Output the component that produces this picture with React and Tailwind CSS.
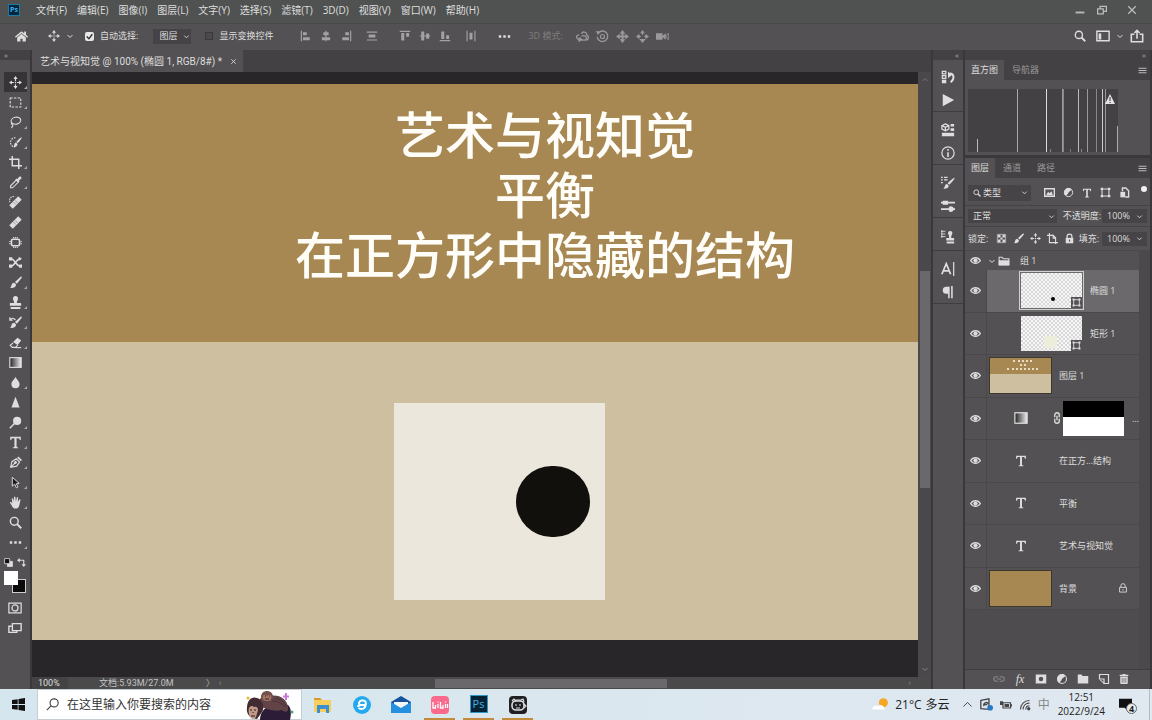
import React from "react";
import { FaHome, FaTrashAlt } from "react-icons/fa";

const Icon = ({ children, className = "size-[14px]" }) => (
  <svg
    viewBox="0 0 16 16"
    fill="none"
    stroke="currentColor"
    strokeWidth="1.4"
    className={`shrink-0 ${className}`}
    aria-hidden="true"
  >
    {children}
  </svg>
);

const Solid = ({ d }) => <path d={d} fill="currentColor" stroke="none" />;

const MOVE = (
  <>
    <path d="M8 3v10M3 8h10" strokeDasharray="3 1.2 1.6 1.2 3" />
    <Solid d="M8 0l2.6 3.6H5.4zM8 16l2.6-3.6H5.4zM0 8l3.6-2.6v5.2zM16 8l-3.6-2.6v5.2z" />
  </>
);
const BRUSH = (
  <Solid d="M15.5.8c.6.6.3 1.3-.2 2L9.6 9.6 7.3 7.4 14 1.2c.5-.5 1-.9 1.500-.4zM6.500 8.200l2.200 2.200c0 3-3 5-7.700 4.200 2-.8 1.600-2 2.200-3.800.5-1.500 1.800-2.600 3.300-2.600z" />
);
const STAMP = (
  <Solid d="M8 0a3.200 3.200 0 0 1 3 4.200C10.500 5.600 9.700 6.500 9.700 8.500H14c.8 0 1 .5 1 1.200V12H1V9.700c0-.7.2-1.200 1-1.200h4.300c0-2-.8-2.900-1.300-4.300A3.200 3.200 0 0 1 8 0zM2 13.500h12V16H2z" />
);
const TYPE = (
  <Solid d="M1.500 1h13v4h-1.200c-.2-1.700-.8-2.300-2.300-2.300H9.300v10c0 .9.4 1.200 1.900 1.300v1H4.800v-1c1.500-.1 1.900-.4 1.900-1.300v-10H5C3.500 2.700 2.900 3.300 2.700 5H1.500z" />
);
const BANDAGE = (
  <>
    <path d="M2.500 13.500l11-11" strokeWidth="6" />
    <path d="M5.500 7.500l3 3M7.500 5.500l3 3" stroke="#8a888a" strokeWidth="1" />
  </>
);
const LENS = (
  <>
    <circle cx="6.500" cy="6.500" r="4.800" strokeWidth="1.800" />
    <path d="M10 10l5 5" strokeWidth="2.400" />
  </>
);
const GRADIENT = (
  <>
    <defs>
      <linearGradient id="ramp">
        <stop offset="0" stopColor="#222" />
        <stop offset="1" stopColor="#eee" />
      </linearGradient>
    </defs>
    <rect x="1" y="2" width="14" height="12" fill="url(#ramp)" />
  </>
);
const DOTS = <Solid d="M1 6.500h3v3H1zM6.500 6.500h3v3h-3zM12 6.500h3v3h-3z" />;
const HALF = (
  <>
    <circle cx="8" cy="8" r="6" />
    <Solid d="M12.500 3.500A6.300 6.300 0 1 0 3.500 12.500c3-.5 3-2 4.500-4.500s3-2 4.500-4.500z" />
  </>
);
const FRAME = (
  <>
    <path d="M3 3h10v10H3z" strokeWidth="1.600" />
    <Solid d="M1 1h3.500v3.500H1zM11.500 1H15v3.500h-3.500zM1 11.500h3.500V15H1zM11.500 11.500H15V15h-3.500z" />
  </>
);
const LOCK = (
  <>
    <path d="M4.500 8V5a3.500 3.500 0 0 1 7 0v3" strokeWidth="1.800" />
    <Solid d="M2.500 7h11v8h-11z" />
    <path d="M8 9.500v3" stroke="#535153" strokeWidth="1.600" />
  </>
);

const TOOLS = [
  { name: "移动", icon: MOVE, more: true },
  { name: "矩形选框", icon: <path d="M1.500 2.500h13v11h-13z" strokeDasharray="3 1.600" />, more: true },
  {
    name: "套索",
    icon: (
      <>
        <ellipse cx="8.500" cy="5.800" rx="6" ry="4.300" transform="rotate(-12 8.500 5.800)" />
        <path d="M3.500 8.500c-1.500 2 1.700 1.700 1.200 3.500-.3 1.200-1.700 1.500-1.400 3" />
      </>
    ),
    more: true,
  },
  {
    name: "快速选择",
    icon: (
      <>
        <path d="M8 2.200A5.500 5.500 0 1 0 7 13.500" strokeDasharray="2 1.300" />
        <Solid d="M15.800 1.500c.4 1-3.300 6-5 7.300L9 7.300C10 5.500 15 .9 15.800 1.500zM8.500 8l2 1.800c0 2.500-2 4.200-5.300 4 1.300-1 1-2 1.300-3.300.3-1.300 1-2.300 2-2.500z" />
      </>
    ),
    more: true,
  },
  { name: "裁剪", icon: <path d="M4 0v12h12M0 4h12v12" strokeWidth="1.800" />, more: true },
  {
    name: "吸管",
    icon: (
      <>
        <path d="M9 5l2.500 2.500-7 7H2V12z" />
        <Solid d="M7.800 4.300l1.300-1.200 1 .9 2.500-3c1.500-1.300 3.700.9 2.400 2.400l-3 2.500.9 1-1.200 1.300z" />
      </>
    ),
    more: true,
  },
  {
    name: "污点修复",
    icon: (
      <>
        {BANDAGE}
        <path d="M1 7.500A5 5 0 0 1 7.500 1" strokeDasharray="1.600 1.200" />
      </>
    ),
  },
  { name: "修复画笔", icon: BANDAGE },
  {
    name: "修补",
    icon: (
      <>
        <rect x="3" y="4" width="10" height="8" rx="2" strokeWidth="2" />
        <path d="M1 6v4M15 6v4M5 2h6M5 14h6" strokeDasharray="1.500 1" />
      </>
    ),
  },
  {
    name: "内容感知移动",
    icon: (
      <>
        <path d="M2 3.500c2 0 3.500 1 6 4.500s4 4.500 6 4.500M2 12.500c2 0 3.500-1 6-4.500s4-4.500 6-4.500" strokeWidth="1.800" />
        <Solid d="M0 1.500h4v4H0zM0 10.500h4v4H0zM12.500 10.500H16v4h-3.500zM12 1l4 2.500L12 6z" />
      </>
    ),
  },
  { name: "画笔", icon: BRUSH, more: true },
  { name: "仿制图章", icon: STAMP, more: true },
  {
    name: "历史记录画笔",
    icon: (
      <>
        {BRUSH}
        <path d="M1 5c2-3 5-3 7 0M1 1.500V5h3.500" />
      </>
    ),
    more: true,
  },
  {
    name: "橡皮擦",
    icon: (
      <>
        <path d="M5 8.500l-3.500 3L4 14h4l3-3" />
        <Solid d="M5 7.500L10.500 2 15 5.500 10.500 11z" />
        <path d="M8 14.300h7" />
      </>
    ),
    more: true,
  },
  { name: "渐变", icon: GRADIENT },
  { name: "模糊", icon: <Solid d="M8 1c1 3 5 5.500 5 9a5 5 0 0 1-10 0c0-3.500 4-6 5-9z" />, more: true },
  { name: "锐化", icon: <Solid d="M8 1l5 13H3z" /> },
  {
    name: "减淡",
    icon: (
      <>
        <circle cx="10" cy="6" r="5" fill="currentColor" stroke="none" />
        <path d="M7 9l-6 6" strokeWidth="1.800" />
      </>
    ),
    more: true,
  },
  { name: "文字", icon: TYPE, more: true },
  {
    name: "钢笔",
    icon: (
      <>
        <path d="M2 14l1.500-7L9 3.500l4 4L9.500 12.500zM2.500 13.500l5-5" />
        <circle cx="8" cy="8" r="1" fill="currentColor" />
        <Solid d="M10 2l1.500-1.500 4.500 4.500L14.500 6.500z" />
      </>
    ),
    more: true,
  },
  {
    name: "路径选择",
    icon: <path d="M4 1.500v11l3-2.500 2 4.500 2-1-2-4 3.500-.5z" fill="#1c1c1c" strokeWidth="1.200" />,
    more: true,
  },
  {
    name: "抓手",
    icon: (
      <Solid d="M1 8c.8-1 2-.3 3 1.200L3.500 3.500c.2-1 1.500-.9 1.700 0l.9 3.500L6.200 1.500c.2-1 1.600-1 1.700 0L8.500 7l1-5c.3-1 1.600-.8 1.600.2L10.900 7.500l1.700-3.200c.5-.9 1.700-.3 1.500.6L13 10c-.6 4-2.400 5.500-5 5.500S4.500 14 3.500 12z" />
    ),
    more: true,
  },
  { name: "缩放", icon: LENS },
  { name: "编辑工具栏", icon: DOTS, more: true },
];

const MENUS = ["文件(F)", "编辑(E)", "图像(I)", "图层(L)", "文字(Y)", "选择(S)", "滤镜(T)", "3D(D)", "视图(V)", "窗口(W)", "帮助(H)"];

const ALIGN = [
  { name: "左对齐", d: "M1 1h1.600v14H1zM4 3h5v4H4zM4 9.500h9v4H4z" },
  { name: "水平居中对齐", d: "M7.200 1h1.600v14H7.200zM4.500 3h7v4h-7zM2.500 9.500h11v4h-11z" },
  { name: "右对齐", d: "M13.400 1H15v14h-1.600zM7 3h5v4H7zM3 9.500h9v4H3z" },
  { name: "垂直分布", d: "M1 2h14v1.500H1zM3.500 6h9v4h-9zM1 12.500h14V14H1z" },
];

const ALIGN_V = [
  { name: "顶对齐", d: "M1 1h14v1.600H1zM3 4h4v10H3zM9.500 4h4v5h-4z" },
  { name: "垂直居中对齐", d: "M1 7.200h14v1.600H1zM3 2h4v12H3zM9.500 4.500h4v7h-4z" },
  { name: "底对齐", d: "M1 13.400h14V15H1zM3 2h4v10H3zM9.500 7h4v5h-4z" },
  { name: "水平分布", d: "M2 1h1.500v14H2zM6 3.500h4v9H6zM12.500 1H14v14h-1.500z" },
];

const Divider = () => <span className="h-[22px] w-px bg-[#403e40]" />;

const Caret = ({ className = "size-2" }) => (
  <Icon className={className}>
    <path d="M3 6l5 5 5-5" strokeWidth="2" />
  </Icon>
);

const IconButton = ({ name, children, className = "" }) => (
  <button type="button" aria-label={name} className={`flex shrink-0 items-center justify-center ${className}`}>
    {children}
  </button>
);

const MenuBar = () => (
  <header className="flex h-[23px] items-center bg-[#505251] pb-[3px] pl-2 pr-[15px] text-[10px]">
    <span className="flex size-3 items-center justify-center border border-[#1c7ba6] bg-[#04263b] text-[7px] font-bold text-[#39b3ee]">
      Ps
    </span>
    <nav className="ml-4 flex gap-[10px] whitespace-nowrap">
      {MENUS.map((m) => (
        <button type="button" key={m}>
          {m}
        </button>
      ))}
    </nav>
    <div className="ml-auto flex items-center gap-3 text-[#bbb]">
      <IconButton name="最小化">
        <Icon className="size-[10px]">
          <path d="M1 12h14" strokeWidth="3" />
        </Icon>
      </IconButton>
      <IconButton name="还原">
        <Icon className="size-[10px]">
          <path d="M1 6h9v8H1zM5 6V2h10v8h-5" strokeWidth="2" />
        </Icon>
      </IconButton>
      <IconButton name="关闭" className="ml-2">
        <Icon className="size-[10px]">
          <path d="M2 2l12 12M14 2L2 14" strokeWidth="2" />
        </Icon>
      </IconButton>
    </div>
  </header>
);

const OptionsBar = () => (
  <div className="flex h-[27px] items-center whitespace-nowrap border-t border-[#484648] bg-[#535153] pb-[2px] pl-[15px] pr-2 text-[9px]">
    <IconButton name="主页">
      <FaHome className="size-[13px]" />
    </IconButton>
    <span className="ml-3">
      <Divider />
    </span>
    <IconButton name="移动工具" className="ml-2 gap-[6px]">
      <Icon className="size-3">{MOVE}</Icon>
      <Caret />
    </IconButton>
    <span className="ml-[6px]">
      <Divider />
    </span>
    <label className="ml-[5px] flex items-center gap-[6px]">
      <span className="grid">
        <input
          type="checkbox"
          defaultChecked
          className="peer col-start-1 row-start-1 size-[9px] appearance-none rounded-[2px] bg-[#e8e8e8]"
        />
        <Icon className="pointer-events-none col-start-1 row-start-1 size-[9px] text-[#333]">
          <path d="M3 8l4 4 6-8" strokeWidth="2.500" />
        </Icon>
      </span>
      自动选择:
    </label>
    <div className="ml-[15px] flex h-[15px] w-[38px] items-center bg-[#454345] pl-[6px]">
      <select aria-label="自动选择" className="w-5 appearance-none bg-transparent">
        <option>图层</option>
      </select>
      <Caret className="ml-1 size-[7px]" />
    </div>
    <span className="ml-2">
      <Divider />
    </span>
    <label className="ml-[6px] flex items-center gap-[6px]">
      <input type="checkbox" className="size-[8px] appearance-none border border-[#3a383a] bg-[#4b494b]" />
      显示变换控件
    </label>
    <span className="ml-[15px]">
      <Divider />
    </span>
    <div className="ml-3 flex items-center gap-2 text-[#a3a1a3]">
      {ALIGN.map((a) => (
        <IconButton name={a.name} key={a.name} className="last:ml-[6px]">
          <Icon className="size-3">
            <Solid d={a.d} />
          </Icon>
        </IconButton>
      ))}
    </div>
    <span className="ml-[11px]">
      <Divider />
    </span>
    <div className="ml-[10px] flex items-center gap-2 text-[#a3a1a3]">
      {ALIGN_V.map((a) => (
        <IconButton name={a.name} key={a.name} className="last:ml-[6px]">
          <Icon className="size-3">
            <Solid d={a.d} />
          </Icon>
        </IconButton>
      ))}
    </div>
    <span className="ml-[11px]">
      <Divider />
    </span>
    <IconButton name="更多选项" className="ml-[10px]">
      <Icon className="size-[13px]">{DOTS}</Icon>
    </IconButton>
    <span className="ml-[10px]">
      <Divider />
    </span>
    <span className="ml-[7px] text-[#7e7c7e]">3D 模式:</span>
    <div className="ml-[13px] flex items-center gap-[7px] text-[#9a989a]">
      <IconButton name="环绕移动">
        <Icon className="size-[13px]">
          <path d="M4 12C-1 10 0 6 4 6M7 5c0-4 7-3 6 1 3 1 3 5 0 7M5 9c1 5 8 4 8 1s-5-4-6-2" strokeWidth="1.600" />
          <Solid d="M3 9l5 3-5 3z" />
        </Icon>
      </IconButton>
      <IconButton name="滚动">
        <Icon className="size-[13px]">
          <circle cx="8" cy="8" r="2.500" />
          <path d="M3 3.500a6.500 6.500 0 1 1-1.500 5" strokeWidth="1.600" />
          <Solid d="M0 1l6 1-4 4z" />
        </Icon>
      </IconButton>
      <IconButton name="平移">
        <Icon className="size-[13px]">
          <Solid d="M8 0l3.500 4.500H9.200V6.800h2.300V4.500L16 8l-4.500 3.500V9.200H9.200v2.300h2.300L8 16l-3.500-4.500h2.300V9.200H4.500v2.300L0 8l4.500-3.500v2.300h2.300V4.500H4.500z" />
        </Icon>
      </IconButton>
      <IconButton name="滑动">
        <Icon className="size-[13px]">
          <Solid d="M8 0l3 4H5zM0 8l4-3 1 3-1 3zM16 8l-4-3-1 3 1 3zM8 16l4-5H4z" />
          <path d="M8 3v3M5 8h1M11 8h-1" />
        </Icon>
      </IconButton>
      <IconButton name="缩放相机">
        <Icon className="size-[13px]">
          <Solid d="M0 4h8v8H0zM7 8l5-4v8z" />
          <path d="M15.200 4v8l-2.500-3V7z" strokeWidth="1" />
        </Icon>
      </IconButton>
    </div>
    <div className="ml-auto flex items-center">
      <IconButton name="搜索">
        <Icon className="size-3">{LENS}</Icon>
      </IconButton>
      <IconButton name="工作区" className="ml-[10px] gap-[6px]">
        <Icon className="size-[14px]">
          <path d="M1 2.500h14v11H1z" strokeWidth="1.600" />
          <Solid d="M3 5h3v7H3z" />
        </Icon>
        <Caret />
      </IconButton>
      <IconButton name="共享" className="ml-[6px]">
        <Icon className="size-[14px]">
          <path d="M5 6H1.500v8.500h13V6H11M8 11V2M5 4.500l3-3 3 3" strokeWidth="1.800" />
        </Icon>
      </IconButton>
    </div>
  </div>
);

const ToolBar = () => (
  <aside className="flex w-8 shrink-0 flex-col border-r-2 border-[#3a383a] bg-[#535153]">
    <div className="h-[10px] bg-[#434143] pl-1 text-[8px] leading-[9px] text-[#aaa]">»</div>
    <div className="mt-3 flex flex-col items-center">
      {TOOLS.map((t, i) => (
        <button
          type="button"
          key={t.name}
          aria-label={t.name}
          className={`relative flex h-5 w-[23px] items-center justify-center ${i === 0 ? "bg-[#363436]" : ""}`}
        >
          <Icon className="size-[13px]">{t.icon}</Icon>
          {t.more && (
            <span className="absolute bottom-[3px] right-0 border-b-[3px] border-l-[3px] border-b-[#aaa] border-l-transparent" />
          )}
        </button>
      ))}
    </div>
    <div className="mt-[6px] flex justify-center gap-1">
      <Icon className="size-[9px]">
        <path d="M6 6h9v9H6z" fill="#ddd" />
        <path d="M1 1h9v9H1z" fill="#111" />
      </Icon>
      <Icon className="size-[9px]">
        <path d="M4 4h8v8" strokeWidth="2" />
        <Solid d="M0 4l5-4v8zM12 16l-4-5h8z" />
      </Icon>
    </div>
    <div className="relative ml-1 mt-1 h-[22px] w-[22px]">
      <button
        type="button"
        aria-label="背景色"
        className="absolute bottom-0 right-0 size-[14px] border border-[#ccc] bg-[#0b0b0b]"
      />
      <button type="button" aria-label="前景色" className="absolute left-0 top-0 size-[14px] bg-white" />
    </div>
    <IconButton name="快速蒙版" className="mt-2">
      <Icon>
        <path d="M1 2.500h14v11H1z" />
        <circle cx="8" cy="8" r="3.500" />
      </Icon>
    </IconButton>
    <IconButton name="屏幕模式" className="mt-[6px]">
      <Icon>
        <path d="M5 3h10v8H5zM4 6H1v7h9v-2" strokeWidth="1.600" />
      </Icon>
    </IconButton>
  </aside>
);

const Workspace = () => (
  <main className="flex min-w-0 flex-1 flex-col">
    <div className="flex h-[22px] items-stretch bg-[#434143] text-[10px]">
      <div className="flex items-center gap-2 bg-[#535153] pl-2 pr-[6px]">
        <span className="whitespace-nowrap font-[Roboto,Noto_Sans_CJK_SC,sans-serif]">
          艺术与视知觉 @ 100% (椭圆 1, RGB/8#) *
        </span>
        <IconButton name="关闭文档">
          <Icon className="size-[7px]">
            <path d="M3 3l10 10M13 3L3 13" strokeWidth="2" />
          </Icon>
        </IconButton>
      </div>
    </div>
    <div className="flex min-h-0 flex-1">
      <div className="grid min-w-0 flex-1 grid-rows-[258fr_298fr] bg-[#282628] pb-[37px] pt-3">
        <section className="min-h-0 bg-[#a78853] pl-[140px] pt-[18px] text-center font-[Noto_Sans_CJK_SC,sans-serif] text-[50px] font-medium leading-[60px] text-[#fffdf8]">
          <h1>艺术与视知觉</h1>
          <h2>平衡</h2>
          <h2>在正方形中隐藏的结构</h2>
        </section>
        <section className="flex min-h-0 justify-center bg-[#cdbf9f] pb-10 pl-[49px] pt-[61px]">
          <div className="relative w-[211px] bg-[#ece7dd]">
            <div className="absolute left-[122px] top-[63px] h-[71px] w-[74px] rounded-full bg-[#11100c]" />
          </div>
        </section>
      </div>
      <div className="flex w-[13px] flex-col items-center bg-[#4a484a] text-[#888]">
        <Icon className="mt-1 size-2">
          <path d="M3 10l5-5 5 5" />
        </Icon>
        <div className="mt-[187px] h-[217px] w-[10px] bg-[#6a686a]" />
        <Caret className="mb-1 mt-auto size-2" />
      </div>
    </div>
    <footer className="flex h-3 items-center bg-[#4a4a4a] font-[Roboto,Noto_Sans_CJK_SC,sans-serif] text-[9px] leading-3">
      <span className="w-9 bg-[#434343] pl-[6px]">100%</span>
      <span className="ml-[31px] whitespace-nowrap text-[#c4c4c4]">文档:5.93M/27.0M</span>
      <span className="ml-8 text-[#aaa]">〉</span>
      <span className="ml-1 text-[#888]">‹</span>
      <div className="ml-auto mr-[241px] h-[9px] w-[232px] bg-[#6a686a]" />
      <span className="mr-5 text-[#888]">›</span>
    </footer>
  </main>
);

const DOCK = [
  {
    height: "h-[52px]",
    items: [
      {
        name: "历史记录",
        icon: (
          <>
            <path d="M1.500 1.500h4v3h-4zM1.500 6.500h4v3h-4z" />
            <Solid d="M1 11h5v4H1zM8 2v7l5-3.500z" />
            <path d="M10 4c5 0 6 6 1 10" strokeWidth="2.200" />
          </>
        ),
      },
      { name: "动作", icon: <Solid d="M2 1l13 7-13 7z" /> },
    ],
  },
  {
    height: "h-[53px]",
    items: [
      {
        name: "属性",
        icon: (
          <>
            <path d="M5 1l4 2v4L5 9 1 7V3zM1 3l4 2 4-2M5 5v4" />
            <Solid d="M11 1h4v3h-4zM11 6h4v3h-4zM1 11h14v4H1z" />
          </>
        ),
      },
      {
        name: "信息",
        icon: (
          <>
            <circle cx="8" cy="8" r="7" />
            <path d="M8 3.500v2M8 7v5.500" strokeWidth="1.800" />
          </>
        ),
      },
    ],
  },
  {
    height: "h-[53px]",
    items: [
      {
        name: "画笔",
        icon: (
          <>
            <path d="M0 1.500h2M3.500 1.500h4M0 4.500h2M3.500 4.500h4M0 7.500h2" />
            <Solid d="M15.500 2c.8.8-4 6-6 8L7.500 8.300C9.500 6.300 14.800 1.300 15.500 2zM6.800 9l2 1.800c0 2.700-2.500 4-6.300 3.700 2.500-1.500 1.500-5.500 4.300-5.500z" />
          </>
        ),
      },
      {
        name: "画笔设置",
        icon: (
          <>
            <path d="M0 4h16M0 11.500h16" strokeWidth="2" />
            <Solid d="M2 2h6v4.500H2zM9 9c2-1.500 5-1 6 2.500-1 3.500-4 4-6 2.500z" />
          </>
        ),
      },
    ],
  },
  {
    height: "h-[33px]",
    items: [
      {
        name: "仿制源",
        icon: (
          <>
            <path d="M0 1.500h5M0 4.500h5M0 7.500h5M1 0v9" strokeWidth="1" />
            <Solid d="M10.500 1a2.500 2.500 0 0 1 2 4c-.6 1-.8 2-.8 4H15v3H6V9h3.300c0-2-.2-3-.8-4a2.500 2.500 0 0 1 2-4zM6.500 13H15v2.500H6.500z" />
          </>
        ),
      },
    ],
  },
  {
    height: "h-[53px]",
    items: [
      {
        name: "字符",
        icon: (
          <>
            <path d="M1 14L6 2l5 12M3 10h6" strokeWidth="2" />
            <path d="M14.500 0v16" />
          </>
        ),
      },
      {
        name: "段落",
        icon: (
          <>
            <Solid d="M12 2H6a4 4 0 0 0 0 8h3V2z" />
            <path d="M9 2v13M12.500 1v14" strokeWidth="1.800" />
          </>
        ),
      },
    ],
  },
];

const Dock = () => (
  <aside className="flex w-[34px] shrink-0 flex-col border-x-2 border-[#3a383a] bg-[#535153]">
    <div className="h-[10px] bg-[#434143] pr-1 text-right text-[8px] leading-[9px] text-[#aaa]">«</div>
    {DOCK.map((g) => (
      <div
        key={g.items[0].name}
        className={`flex flex-col items-center justify-center gap-[9px] border-b border-[#3f3d3f] pt-[6px] ${g.height}`}
      >
        {g.items.map((it) => (
          <IconButton name={it.name} key={it.name}>
            <Icon>{it.icon}</Icon>
          </IconButton>
        ))}
      </div>
    ))}
  </aside>
);

const PanelTabs = ({ tabs }) => (
  <div className="flex h-5 items-stretch bg-[#434143] pr-[3px] text-[9px]" role="tablist">
    {tabs.map((t, i) => (
      <button
        type="button"
        role="tab"
        aria-selected={i === 0}
        key={t}
        className={i === 0 ? "bg-[#535153] px-[6px]" : "px-2 text-[#9a989a]"}
      >
        {t}
      </button>
    ))}
    <IconButton name="面板菜单" className="ml-auto">
      <Icon className="size-[9px]">
        <path d="M1 4h14M1 8h14M1 12h14" />
      </Icon>
    </IconButton>
  </div>
);

// x, height and shade of every bar in the histogram
const BARS = [
  [9, 13, "#bbb"],
  [49, 63, "#aaa"],
  [78, 63, "#ddd"],
  [82, 3, "#888"],
  [94, 63, "#999"],
  [95, 63, "#888"],
  [102, 3, "#777"],
  [110, 63, "#bbb"],
  [113, 3, "#888"],
  [119, 63, "#999"],
  [128, 63, "#888"],
  [134, 63, "#ccc"],
  [137, 63, "#999"],
  [149, 26, "#aaa"],
];

const Histogram = () => (
  <div className="h-[75px] px-[3px] pt-[9px]">
    <svg width="150" height="63" viewBox="0 0 150 63" className="bg-[#434143]" aria-label="直方图">
      {BARS.map(([x, h, c]) => (
        <rect key={x} x={x} y={63 - h} width="1" height={h} fill={c} />
      ))}
      <path d="M142 5l5 10h-10z" fill="#e4e4e4" />
      <path d="M142 8v4M142 13v1" stroke="#333" />
    </svg>
  </div>
);

const CHECKER =
  "bg-[#f2f2f2] bg-[conic-gradient(#f6f6f6_25%,#d8d8d8_0_50%,#f6f6f6_0_75%,#d8d8d8_0)] bg-[length:4px_4px]";

const ShapeBadge = () => (
  <span className="absolute bottom-0 right-0 flex size-[11px] items-center justify-center bg-[#535153]">
    <Icon className="size-[9px]">{FRAME}</Icon>
  </span>
);

const ShapeThumb = ({ active }) => (
  <span className={`relative flex h-[35px] w-[61px] shrink-0 ${CHECKER} ${active ? "outline outline-1 outline-offset-1 outline-[#d0d0d0]" : ""}`}>
    {active ? (
      <span className="absolute left-[30px] top-6 size-1 rounded-full bg-black" />
    ) : (
      <span className="absolute left-[23px] top-5 h-3 w-[13px] bg-[#ededdc]" />
    )}
    <ShapeBadge />
  </span>
);

const TextThumb = () => (
  <span className="flex w-[61px] shrink-0 justify-center">
    <Icon className="size-3">{TYPE}</Icon>
  </span>
);

const LAYERS = [
  { name: "椭圆 1", thumb: <ShapeThumb active />, nested: true, active: true },
  { name: "矩形 1", thumb: <ShapeThumb />, nested: true },
  {
    name: "图层 1",
    thumb: (
      <span className="flex h-[35px] w-[61px] flex-col items-center bg-[#cdbf9f] outline outline-1 outline-[#3d372c]">
        <span className="flex h-4 w-full flex-col items-center gap-[2px] bg-[#a78853] pt-[2px]">
          <span className="ml-1 w-[19px] border-t-2 border-dotted border-[#e9dcc2]" />
          <span className="ml-1 w-[6px] border-t-2 border-dotted border-[#e9dcc2]" />
          <span className="ml-1 w-[31px] border-t-2 border-dotted border-[#e9dcc2]" />
        </span>
      </span>
    ),
  },
  {
    name: "…",
    thumb: (
      <>
        <span className="flex w-[61px] shrink-0 justify-center">
          <Icon>{GRADIENT}</Icon>
        </span>
        <span className="-mx-2 flex w-3 shrink-0 justify-center">
          <Icon className="size-3">
            <path d="M5 7V4a3 3 0 0 1 6 0v3M5 9v3a3 3 0 0 0 6 0V9M8 5v6" strokeWidth="1.800" />
          </Icon>
        </span>
        <span className="flex h-[35px] w-[61px] shrink-0 flex-col bg-white">
          <span className="h-4 bg-black" />
        </span>
      </>
    ),
  },
  { name: "在正方...结构", thumb: <TextThumb /> },
  { name: "平衡", thumb: <TextThumb /> },
  { name: "艺术与视知觉", thumb: <TextThumb /> },
  {
    name: "背景",
    thumb: <span className="h-[35px] w-[61px] bg-[#a78853] outline outline-1 outline-[#3d372c]" />,
    locked: true,
  },
];

const Eye = () => (
  <IconButton name="显示或隐藏图层" className="w-[21px] self-stretch">
    <Icon className="size-[11px]">
      <path d="M1 8c3.500-5.500 10.500-5.500 14 0-3.500 5.500-10.500 5.500-14 0z" strokeWidth="2" />
      <circle cx="8" cy="8" r="2.500" fill="currentColor" />
    </Icon>
  </IconButton>
);

const LayerRow = ({ layer }) => (
  <li className="flex min-h-0 flex-1 items-center border-b border-[#4a484a]">
    <Eye />
    <div
      className={`flex min-w-0 flex-1 items-center gap-2 self-stretch border-l border-[#4a484a] ${
        layer.nested ? "pl-[34px]" : "pl-[3px]"
      } ${layer.active ? "bg-[#6b696b]" : ""}`}
    >
      {layer.thumb}
      <span className="whitespace-nowrap">{layer.name}</span>
      {layer.locked && (
        <Icon className="ml-auto mr-[11px] size-[10px]">
          <path d="M4.500 7V4.500a3.500 3.500 0 0 1 7 0V7M2.500 7h11v7.500h-11zM8 9.500v2.500" />
        </Icon>
      )}
    </div>
  </li>
);

const PercentBox = ({ id }) => (
  <span className="flex h-[14px] w-[45px] items-center bg-[#464446]">
    <input id={id} defaultValue="100%" className="w-[34px] bg-transparent pl-[5px]" />
    <Caret className="size-[7px]" />
  </span>
);

const LayerControls = () => (
  <div className="text-[9px]">
    <div className="flex h-[28px] items-center border-b border-[#444244] pl-[3px] pr-[3px] pt-[2px]">
      <div className="flex h-4 w-[63px] items-center bg-[#464446] pl-[5px] pr-[3px]">
        <Icon className="size-2">{LENS}</Icon>
        <select aria-label="筛选类型" className="ml-[2px] flex-1 appearance-none bg-transparent">
          <option>类型</option>
        </select>
        <Caret className="size-[7px]" />
      </div>
      <div className="ml-[13px] flex items-center gap-2">
        <IconButton name="像素图层">
          <Icon className="size-[11px]">
            <path d="M1 2.500h14v11H1z" strokeWidth="2" />
            <Solid d="M3 12l3-5 2 2 3-3 2 6z" />
          </Icon>
        </IconButton>
        <IconButton name="调整图层">
          <Icon className="size-[11px]">{HALF}</Icon>
        </IconButton>
        <IconButton name="文字图层">
          <Icon className="size-[10px]">{TYPE}</Icon>
        </IconButton>
        <IconButton name="形状图层">
          <Icon className="size-[11px]">{FRAME}</Icon>
        </IconButton>
        <IconButton name="智能对象">
          <Icon className="size-[11px]">
            <path d="M5 6V1.500h5l4 4v9H9" strokeWidth="2" />
            <Solid d="M2 7h7v8H2z" />
          </Icon>
        </IconButton>
      </div>
      <button type="button" aria-label="打开或关闭筛选" className="mb-2 ml-auto size-[6px] rounded-full bg-[#f0f0f0]" />
    </div>
    <div className="flex h-[21px] items-center border-b border-[#444244] pl-[3px] pr-[3px]">
      <div className="flex h-[14px] min-w-0 flex-1 items-center bg-[#464446] pl-[5px] pr-[2px]">
        <select aria-label="混合模式" className="min-w-0 flex-1 appearance-none bg-transparent">
          <option>正常</option>
        </select>
        <Caret className="size-[7px]" />
      </div>
      <label htmlFor="opacity" className="ml-[6px] mr-px whitespace-nowrap">
        不透明度:
      </label>
      <PercentBox id="opacity" />
    </div>
    <div className="flex h-[23px] items-center pl-[3px] pr-[3px]">
      <span className="whitespace-nowrap">锁定:</span>
      <div className="ml-2 flex items-center gap-[6px]">
        <IconButton name="锁定透明像素">
          <Icon className="size-[11px]">
            <path d="M2 2h12v12H2z" strokeWidth="1" />
            <Solid d="M3 3h3.500v3.500H3zM9.500 3H13v3.500H9.500zM6.500 6.500h3v3h-3zM3 9.500h3.500V13H3zM9.500 9.500H13V13H9.500z" />
          </Icon>
        </IconButton>
        <IconButton name="锁定图像像素">
          <Icon className="size-[11px]">{BRUSH}</Icon>
        </IconButton>
        <IconButton name="锁定位置">
          <Icon className="size-[11px]">{MOVE}</Icon>
        </IconButton>
        <IconButton name="锁定画板">
          <Icon className="size-[11px]">
            <path d="M3.500 0v14H16M0 3.500h9M12.500 16V7L9 3.500v4h3.500" strokeWidth="1.600" />
          </Icon>
        </IconButton>
        <IconButton name="锁定全部">
          <Icon className="size-[11px]">{LOCK}</Icon>
        </IconButton>
      </div>
      <label htmlFor="fill" className="ml-auto mr-[3px] whitespace-nowrap">
        填充:
      </label>
      <PercentBox id="fill" />
    </div>
  </div>
);

const LayersFooter = () => (
  <div className="flex h-5 items-center justify-end gap-[9px] border-t border-[#3f3d3f] pb-[2px] pr-[21px]">
    <IconButton name="链接图层" className="text-[#8a888a]">
      <Icon className="size-3">
        <path d="M7 5H4a3 3 0 0 0 0 6h3M9 5h3a3 3 0 0 1 0 6H9M5 8h6" />
      </Icon>
    </IconButton>
    <button type="button" aria-label="图层样式" className="w-3 font-['Liberation_Serif',serif] text-[12px] italic leading-3">
      fx
    </button>
    <IconButton name="添加蒙版">
      <Icon className="size-3">
        <path d="M1 2h14v12H1zM8 5a3 3 0 1 0 0 6 3 3 0 0 0 0-6z" fill="currentColor" fillRule="evenodd" stroke="none" />
      </Icon>
    </IconButton>
    <IconButton name="新建调整图层">
      <Icon className="size-3">{HALF}</Icon>
    </IconButton>
    <IconButton name="新建组">
      <Icon className="size-3">
        <Solid d="M1 2h5l1.500 2H15v10H1z" />
      </Icon>
    </IconButton>
    <IconButton name="新建图层">
      <Icon className="size-3">
        <path d="M2 2h12v12H8V8H2z" strokeWidth="1.600" />
        <path d="M3 9l5 5" />
      </Icon>
    </IconButton>
    <IconButton name="删除图层">
      <FaTrashAlt className="size-[10px]" />
    </IconButton>
  </div>
);

const Panels = () => (
  <aside className="flex w-[187px] shrink-0 flex-col border-r-2 border-[#3a383a] bg-[#535153]">
    <div className="h-[10px] bg-[#434143] pr-1 text-right text-[8px] leading-[9px] text-[#aaa]">»</div>
    <PanelTabs tabs={["直方图", "导航器"]} />
    <Histogram />
    <div className="h-[3px] bg-[#3a383a]" />
    <PanelTabs tabs={["图层", "通道", "路径"]} />
    <LayerControls />
    <div className="flex min-h-0 flex-1 bg-[#4e4c4e] text-[9px]">
      <div className="flex min-w-0 flex-1 flex-col">
        <div className="flex h-5 shrink-0 items-center border-t border-[#4a484a] bg-[#535153]">
          <Eye />
          <Caret className="ml-[2px] size-2" />
          <Icon className="ml-[2px] size-3">
            <path d="M1.500 13V3h4l1.500 2h7.500v8z" />
            <Solid d="M1 7h14v7H1z" />
          </Icon>
          <span className="ml-[10px]">组 1</span>
        </div>
        <ul className="flex h-[340px] shrink-0 flex-col bg-[#535153]">
          {LAYERS.map((l) => (
            <LayerRow layer={l} key={l.name} />
          ))}
        </ul>
      </div>
      <div className="w-[11px] bg-[#4b494b]" />
    </div>
    <LayersFooter />
  </aside>
);

const APPS = [
  {
    name: "文件资源管理器",
    art: (
      <>
        <path d="M1 3h6l2 2H1z" fill="#d79a2b" />
        <path d="M1 5h17v12H1z" fill="#f8cf5c" />
        <path d="M4 10h12v8h-3v-4H7v4H4z" fill="#3d8fd0" />
      </>
    ),
  },
  {
    name: "浏览器",
    art: (
      <>
        <circle cx="10" cy="10" r="9" fill="#25a9ee" />
        <path
          d="M13.500 6.500C11 4.500 7.500 5.500 7 8c-.3 1.500 1 2 3 2h3.500c0 3.500-4 5-7 3M6 12c0-1.500 1.500-2 4-2h3.500c.5-1 .5-2 0-3.500"
          fill="none"
          stroke="#fff"
          strokeWidth="2"
        />
      </>
    ),
  },
  {
    name: "邮件",
    art: (
      <>
        <path d="M0 7l10-6 10 6v3H0z" fill="#15539c" />
        <path d="M3 7h14v6H3z" fill="#f4f8fb" />
        <path d="M0 7l10 6 10-6v11H0z" fill="#2590df" />
      </>
    ),
  },
  {
    name: "哔哩哔哩",
    running: true,
    art: (
      <>
        <rect x="1" y="1" width="18" height="18" rx="4" fill="#fb6a8d" />
        <path d="M3 7v6h2.500v-3M8 9v4M8 6.500v1M10.500 7v6H13v-3M15.500 9v4M15.500 6.500v1M17.500 9v4" fill="none" stroke="#fff" strokeWidth="1.300" />
      </>
    ),
  },
  { name: "Photoshop", running: true, label: "Ps" },
  {
    name: "录屏",
    running: true,
    art: (
      <>
        <rect x="1" y="1" width="18" height="18" rx="4" fill="#1f2024" />
        <rect x="4" y="6" width="12" height="9" rx="4" fill="none" stroke="#ddd" strokeWidth="1.600" />
        <path d="M4 6l2-2 2 2M8 5h5l2-1 1 3M7 10h2M11 10h2M8 13h4M16 9l2 2-2 2" fill="none" stroke="#ddd" strokeWidth="1.200" />
      </>
    ),
  },
];

// The pair of gorillas at the end of the search box
const Gorillas = () => (
  <svg viewBox="0 0 48 30" className="h-[30px] w-12 shrink-0" aria-hidden="true">
    <path d="M14 30c0-8 5-13 12-15h16c4 4 3 10 2 15z" fill="#2d1c38" />
    <path d="M12 12c2-5 7-7 12-6 9-2 17 3 18 11 1 5-3 6-6 3-8 2-16-1-22-4z" fill="#624448" />
    <path d="M26 11c5 0 10 2 13 6M30 8c4 1 8 4 10 8" stroke="#4a3137" fill="none" />
    <path d="M15 7c0-8 12-8 12 0l-2 4h-8z" fill="#73504c" />
    <path d="M17 6c1-2 3-1 4 0 1-1 3-2 4 0 1 3-1 5-4 5s-5-2-4-5z" fill="#a27566" />
    <path d="M19 6h1M23 6h1M19 9h4" stroke="#38242a" />
    <path d="M1 18C1 10 6 6 11 8c6 2 8 9 5 14l-5 7C4 28 0 24 1 18z" fill="#422b31" />
    <path d="M3 18c2-3 4-2 5-1 2-1 4 0 4 3l-2 7c-2 3-5 2-6 0-1-3-2-6-1-9z" fill="#c19a88" />
    <path d="M4 20h2M8 20h2M5 26h4M7 22v1" stroke="#2b1c20" />
    <path d="M40 3v7M37 6.500h6" stroke="#c67ad6" strokeWidth="2" />
    <circle cx="2" cy="8" r="1.500" fill="#e5b93a" />
    <circle cx="46" cy="22" r="1.500" fill="#4da36a" />
  </svg>
);

const TaskBar = () => (
  <footer className="flex h-[31px] shrink-0 items-stretch bg-gradient-to-r from-[#d5e6ee] to-[#e0e8f0] text-[#222]">
    <IconButton name="开始" className="w-[37px]">
      <Icon className="size-[13px] text-[#111]">
        <Solid d="M0 2.500l7-1v6H0zM8 1.300L16 0v7.500H8zM0 8.500h7v6l-7-1zM8 8.500h8V16l-8-1.300z" />
      </Icon>
    </IconButton>
    <div className="flex w-[265px] items-center border border-[#c6cdd2] bg-white pl-2 pr-[7px]">
      <Icon className="size-[13px] -scale-x-100 text-[#444]">
        <circle cx="6" cy="6" r="5" />
        <path d="M9.500 9.500L15 15" />
      </Icon>
      <input
        aria-label="搜索"
        placeholder="在这里输入你要搜索的内容"
        className="ml-2 min-w-0 flex-1 bg-transparent text-[12px] placeholder:text-[#333]"
      />
      <Gorillas />
    </div>
    <div className="ml-px flex">
      {APPS.map((a) => (
        <button
          type="button"
          key={a.name}
          aria-label={a.name}
          className="flex w-[39px] flex-col items-center justify-between pt-[6px]"
        >
          {a.label ? (
            <span className="flex size-[18px] items-center justify-center border border-[#2e96c4] bg-[#062336] text-[11px] text-[#42b4ea]">
              {a.label}
            </span>
          ) : (
            <svg viewBox="0 0 20 20" className="size-5" aria-hidden="true">
              {a.art}
            </svg>
          )}
          {a.running && <span className="h-[2px] w-[31px] bg-[#c38b3c]" />}
        </button>
      ))}
    </div>
    <div className="ml-auto flex items-center whitespace-nowrap text-[12px]">
      <Icon className="size-[18px]">
        <circle cx="11" cy="6" r="4" fill="#f5a623" stroke="none" />
        <path d="M1 12c0-3 3-4 5-3 2-2 6-1 6 3z" fill="#fff" stroke="none" />
      </Icon>
      <span className="ml-[6px]">21°C</span>
      <span className="ml-1">多云</span>
      <div className="ml-3 flex items-center gap-[7px] text-[#444]">
        <IconButton name="显示隐藏的图标">
          <Icon className="size-[11px]">
            <path d="M2 11l6-6 6 6" />
          </Icon>
        </IconButton>
        <Icon className="size-[13px]">
          <path d="M1 3l10-2v13L1 13zM5 10c-2-4 4-6 5-3M5 8h4" strokeWidth="1.600" />
          <circle cx="12.500" cy="12" r="3.500" fill="#2779c4" stroke="none" />
        </Icon>
        <Icon className="size-3">
          <path d="M4 5h10v7H4z" strokeWidth="1.600" />
          <Solid d="M6 6.500h6v4H6zM14.500 7H16v3h-1.500zM0 3h4v5H0z" />
        </Icon>
        <Icon className="size-3">
          <path d="M2 14C2 7 7 2 14 2M5.500 14C5.500 9 9 5.500 14 5.500M9 14c0-3 2-5 5-5" />
          <circle cx="13" cy="13" r="1.500" fill="currentColor" />
        </Icon>
        <span className="text-[12px] text-[#888]">中</span>
      </div>
      <time className="ml-2 pb-px text-center text-[10px] leading-[14px]">
        12:51
        <br />
        2022/9/24
      </time>
      <button type="button" aria-label="4 条新通知" className="relative ml-[14px] mr-3 size-[18px]">
        <Icon className="size-[13px] text-[#111]">
          <Solid d="M0 1h16v11h-5v4l-4-4H0z" />
        </Icon>
        <span className="absolute bottom-0 right-0 flex size-[11px] items-center justify-center rounded-full border border-[#666] bg-[#e9edf1] text-[9px] font-bold leading-none">
          4
        </span>
      </button>
      <span className="mr-[2px] h-full w-px bg-[#b5bdc4]" />
    </div>
  </footer>
);

const App = () => {
  return (
    <div className="flex h-screen flex-col overflow-hidden bg-[#535153] font-['Open_Sans','Noto_Sans_CJK_SC',sans-serif] text-[#dedede]">
      <MenuBar />
      <OptionsBar />
      <div className="flex min-h-0 flex-1">
        <ToolBar />
        <Workspace />
        <Dock />
        <Panels />
      </div>
      <TaskBar />
    </div>
  );
};

export default App;
